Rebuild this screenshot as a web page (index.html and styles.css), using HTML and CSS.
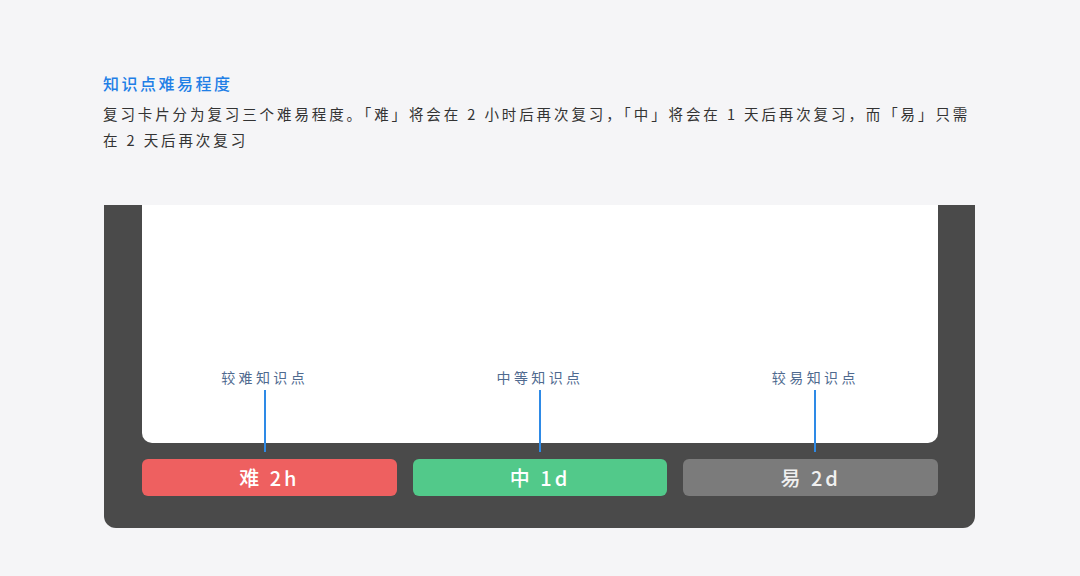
FILE: index.html
```html
<!DOCTYPE html>
<html lang="zh-CN">
<head>
    <meta charset="UTF-8">
    <title>知识点难易程度</title>
    <link rel="stylesheet" href="styles.css">
</head>
<body>
<div class="page">
    <h2 class="title">知识点难易程度</h2>
    <p class="desc">复习卡片分为复习三个难易程度。「难」将会在 2 小时后再次复习，「中」将会在 1 天后再次复习，而「易」只需在 2 天后再次复习</p>

    <div class="device">
        <div class="card">
            <div class="callouts">
                <div class="callout">
                    <span class="callout-label">较难知识点</span>
                    <span class="callout-line"></span>
                </div>
                <div class="callout">
                    <span class="callout-label">中等知识点</span>
                    <span class="callout-line"></span>
                </div>
                <div class="callout">
                    <span class="callout-label">较易知识点</span>
                    <span class="callout-line"></span>
                </div>
            </div>
        </div>
        <div class="buttons">
            <div class="btn hard">难 2h</div>
            <div class="btn medium">中 1d</div>
            <div class="btn easy">易 2d</div>
        </div>
    </div>
</div>
</body>
</html>
```

FILE: styles.css
```css
body {
    margin: 0;
    background-color: #f5f5f7;
    font-family: "Noto Sans CJK SC", "Noto Sans", sans-serif;
}

.page {
    width: 872px;
    padding: 71px 0 0 103px;
}

.title {
    margin: 0;
    font-size: 16px;
    line-height: 24px;
    font-weight: 500;
    letter-spacing: 2.5px;
    color: #1f7fe6;
}

.desc {
    margin: 6px 0 0 0;
    font-size: 14.5px;
    line-height: 26px;
    letter-spacing: 2.9px;
    color: #333;
}

.device {
    margin-top: 52px;
    margin-left: 1px;
    width: 871px;
    height: 323px;
    box-sizing: border-box;
    padding: 0 37px 0 38px;
    background-color: #4a4a4a;
    border-radius: 0 0 12px 12px;
}

.card {
    height: 238px;
    background-color: #fff;
    border-radius: 0 0 10px 10px;
    display: flex;
    flex-direction: column;
    justify-content: flex-end;
}

.callouts {
    display: grid;
    grid-template-columns: 1fr 1fr 1fr;
    gap: 16px;
    margin: 0 -7px -9px -7px;
    position: relative;
}

.callout {
    display: flex;
    flex-direction: column;
    align-items: center;
}

.callout-label {
    font-size: 14px;
    line-height: 18px;
    letter-spacing: 3.4px;
    color: #4f6a8f;
}

.callout-line {
    display: block;
    width: 2px;
    height: 62px;
    margin-top: 4px;
    background-color: #2e8ae6;
}

.buttons {
    display: grid;
    grid-template-columns: 1fr 1fr 1fr;
    gap: 16px;
    margin-top: 16px;
}

.btn {
    height: 37px;
    border-radius: 6px;
    display: flex;
    align-items: center;
    justify-content: center;
    font-size: 20px;
    font-weight: 500;
    letter-spacing: 3px;
    color: #fff;
}

.hard {
    background-color: #ee6060;
}

.medium {
    background-color: #52c98a;
}

.easy {
    background-color: #7b7b7b;
    color: #f0f0f0;
}
```
